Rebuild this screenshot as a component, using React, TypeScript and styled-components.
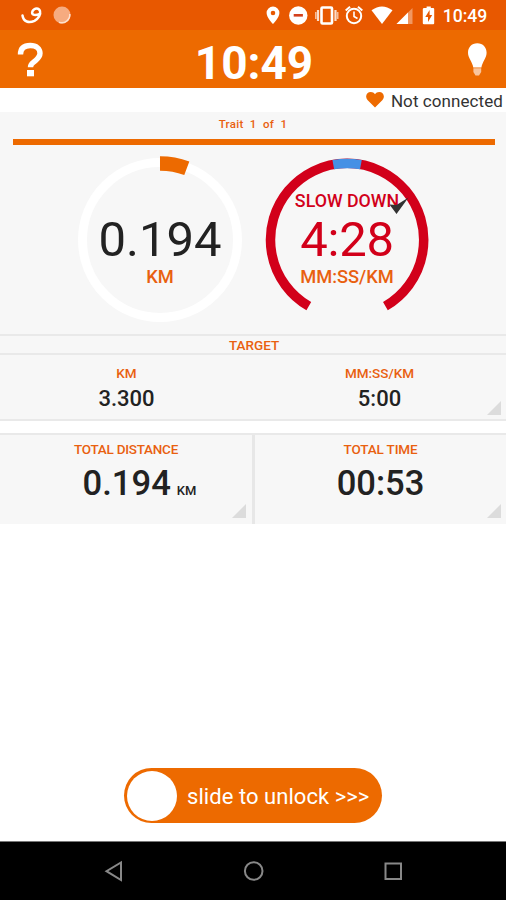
import React from "react";
import styled, { createGlobalStyle } from "styled-components";

const ORANGE = "#ed6a00";
const LABEL = "#e9600f";
const INK = "#222222";
const RED = "#d2001a";
const LINE = "#e9e9e9";

const GlobalStyle = createGlobalStyle`
  *, *::before, *::after { box-sizing: border-box; }
  body { margin: 0; background: #fff; }
`;

const Screen = styled.div`
  width: 506px;
  height: 900px;
  display: flex;
  flex-direction: column;
  overflow: hidden;
  background: #fff;
  color: ${INK};
  font-family: Roboto, "Liberation Sans", sans-serif;
`;

const StatusBar = styled.div`
  flex: none;
  height: 30px;
  background: #e85800;
  svg { display: block; }
`;

const AppBar = styled.header`
  flex: none;
  height: 58px;
  display: grid;
  grid-template-columns: 60px 1fr 58px;
  align-items: center;
  background: ${ORANGE};
  svg { display: block; }
`;

const Label = styled.span<{ $size: number; $weight?: number; $color?: string; $spacing?: number }>`
  display: block;
  white-space: pre;
  font-size: ${(p) => p.$size}px;
  line-height: 1;
  font-weight: ${(p) => p.$weight ?? 500};
  color: ${(p) => p.$color ?? LABEL};
  letter-spacing: ${(p) => p.$spacing ?? 0}px;
`;

const Clock = styled(Label)`
  text-align: center;
  padding-top: 8px;
`;

const Connection = styled.div`
  flex: none;
  height: 24px;
  display: flex;
  align-items: center;
  justify-content: flex-end;
  gap: 6px;
  padding: 3px 3px 0 0;
  svg { margin: -4px 1px 0 0; }
`;

const Workout = styled.section`
  flex: none;
  height: 222px;
  background: #f7f7f7;
  display: flex;
  flex-direction: column;
  align-items: center;
  padding-top: 7px;
`;

const ProgressBar = styled.div`
  width: 482px;
  height: 6px;
  margin: 8px 0 0 1px;
  background: ${ORANGE};
`;

const Gauges = styled.div`
  display: flex;
  gap: 13px;
  margin: 8px 0 0 1px;
`;

const Gauge = styled.div`
  position: relative;
  width: 174px;
  height: 174px;
  svg { display: block; }
`;

const Readout = styled.div`
  position: absolute;
  inset: 0;
  display: flex;
  flex-direction: column;
  align-items: center;
`;

const State = styled.div`
  height: 62px;
  padding-top: 39px;
`;

const Unit = styled.div`
  margin-top: 4px;
`;

const TargetTitle = styled.div`
  flex: none;
  height: 21px;
  display: flex;
  justify-content: center;
  padding: 3px 0 0 2px;
  background: #f7f7f7;
  border-top: 2px solid ${LINE};
  border-bottom: 2px solid ${LINE};
`;

const Row = styled.section<{ $height: number }>`
  flex: none;
  height: ${(p) => p.$height}px;
  display: grid;
  grid-template-columns: 1fr 1fr;
  background: #f7f7f7;
`;

const TargetRow = styled(Row)`
  border-bottom: 2px solid ${LINE};
`;

const TotalRow = styled(Row)`
  margin-top: 12px;
  border-top: 2px solid ${LINE};
  grid-template-columns: 255px 1fr;
`;

const Cell = styled.div<{ $top: number; $gap: number; $divider?: boolean }>`
  position: relative;
  display: flex;
  flex-direction: column;
  align-items: center;
  gap: ${(p) => p.$gap}px;
  padding-top: ${(p) => p.$top}px;
  border-right: ${(p) => (p.$divider ? "3px solid #e7e7e7" : "0")};
`;

const Corner = styled.i<{ $right: number; $bottom: number }>`
  position: absolute;
  right: ${(p) => p.$right}px;
  bottom: ${(p) => p.$bottom}px;
  width: 14px;
  height: 14px;
  background: #dcdcdc;
  clip-path: polygon(100% 0, 100% 100%, 0 100%);
`;

const Measure = styled.div`
  display: flex;
  align-items: baseline;
  gap: 6px;
  padding-left: 27px;
`;

const Spacer = styled.div`
  flex: 1;
`;

const Slider = styled.button`
  flex: none;
  align-self: center;
  width: 258px;
  height: 55px;
  margin: 0 0 18px 0;
  border: 0;
  border-radius: 28px;
  padding: 0 0 0 3px;
  display: flex;
  align-items: center;
  gap: 10px;
  background: ${ORANGE};
  font-family: inherit;
`;

const Knob = styled.span`
  width: 50px;
  height: 50px;
  border-radius: 50%;
  background: #fff;
`;

const SlideText = styled(Label)`
  padding-top: 3px;
`;

const NavBar = styled.nav`
  flex: none;
  height: 59px;
  background: #000;
  border-top: 1px solid #777;
  svg { display: block; }
`;

function StatusIcons() {
  return (
    <svg width="506" height="30" viewBox="0 0 506 30" fill="#fff">
      <path d="M22.500 15.500C23.500 22 29 23.300 34.500 20.800C38.500 18.800 41 14.500 40 11C39 7.500 34.500 7.500 32.500 11.200C31 14.500 34 16.200 40 13.800" fill="none" stroke="#fff" strokeWidth="2.500" strokeLinecap="round" />
      <circle cx="62" cy="15" r="8.500" fill="#f6ab80" />
      <path d="M69.800 14A8 8 0 0 1 59 22.200" fill="none" stroke="#fde0cf" strokeWidth="1.500" />
      <path fillRule="evenodd" d="M273 6.500A6.400 6.400 0 0 0 266.600 13C266.600 17.600 273 24 273 24S279.400 17.600 279.400 13A6.400 6.400 0 0 0 273 6.500ZM273 10.700A2.300 2.300 0 1 1 273 15.300A2.300 2.300 0 0 1 273 10.700Z" />
      <circle cx="298.300" cy="15.500" r="9.200" />
      <rect x="293.700" y="14" width="9.200" height="2.600" fill="#d3401c" />
      <g fill="none" stroke="#fff">
        <rect x="321.500" y="7.500" width="10.500" height="16" rx="1" strokeWidth="2.600" />
        <path d="M318 10V21M335.500 10V21" strokeWidth="2.200" opacity=".8" />
        <path d="M315.800 12V19M337.700 12V19" strokeWidth="1.600" opacity=".6" />
        <circle cx="354" cy="16" r="7.200" strokeWidth="2" />
        <path d="M354 11.500V16.500L357.500 18.500" strokeWidth="1.600" />
        <path d="M345.700 10.500L350 6.800M362.300 10.500L358 6.800" strokeWidth="2" />
      </g>
      <path d="M371.500 10.300Q382 2.500 392.500 10.300L382 24Z" />
      <path d="M412.500 8V24H396.500Z" opacity=".38" />
      <path d="M408 12.500V24H396.500Z" />
      <path d="M424.300 8H426.600V6.500H430.800V8H433.100Q434.200 8 434.200 9V23.300Q434.200 24.300 433.200 24.300H424Q422.800 24.300 422.800 23.300V9Q422.800 8 424.300 8Z" />
      <path d="M429.600 10L425.300 17H428V22L432.200 15H429.600Z" fill="#e85800" />
      <text x="442.800" y="22" fontFamily="Roboto" fontSize="17.600" fontWeight="500" textLength="44.500">10:49</text>
    </svg>
  );
}

function Help() {
  return (
    <svg width="60" height="58" viewBox="0 0 60 58">
      <path d="M20.500 24.500C20.500 18 24.300 15.500 30.300 15.500C36.500 15.500 40 18.800 40 23.300C40 27 37.500 28.800 35 31C32.500 33.200 30.500 33.500 30.500 37.300" fill="none" stroke="#fff" strokeWidth="5.400" />
      <rect x="27" y="40" width="7" height="6.300" fill="#fff" />
    </svg>
  );
}

function Bulb() {
  return (
    <svg width="58" height="58" viewBox="0 0 58 58">
      <path d="M29.300 13.300C23.500 13.300 20 17.500 20 22.700C20 28 24.500 32 25.300 37.500H33.400C34.200 32 38.600 28 38.600 22.700C38.600 17.500 35 13.300 29.300 13.300Z" fill="#fff" />
      <path d="M25.400 38.300H33.200V42L31 45.500H27.500L25.400 42Z" fill="#f9c59d" />
    </svg>
  );
}

function Heart() {
  return (
    <svg width="18" height="17" viewBox="0 0 18 17">
      <path d="M9 16.500L1.500 9C-1.500 5.500 0.800 1 4.800 1C6.600 1 8 1.900 9 3.200C10 1.900 11.400 1 13.200 1C17.200 1 19.500 5.500 16.500 9Z" fill={ORANGE} />
    </svg>
  );
}

function DistanceRing() {
  return (
    <svg width="174" height="174" viewBox="73 153 174 174" fill="none">
      <circle cx="160" cy="240" r="77.500" stroke="#fff" strokeWidth="9" />
      <path d="M160 163.500A76.500 76.500 0 0 1 186.800 168.300" stroke={ORANGE} strokeWidth="14.500" />
    </svg>
  );
}

function PaceRing() {
  return (
    <svg width="174" height="174" viewBox="260 153 174 174" fill="none">
      <path d="M308.800 306.200A76.600 76.600 0 1 1 385.400 306.200" stroke={RED} strokeWidth="9.500" />
      <path d="M333.300 164.700A76.600 76.600 0 0 1 360.900 164.700" stroke="#4590e5" strokeWidth="9.500" />
    </svg>
  );
}

const Needle = styled.svg`
  position: absolute;
  left: 127px;
  top: 42px;
`;

export default function App() {
  return (
    <>
      <GlobalStyle />
      <Screen>
        <StatusBar><StatusIcons /></StatusBar>
        <AppBar>
          <Help />
          <Clock $size={46} $weight={700} $color="#fff">10:49</Clock>
          <Bulb />
        </AppBar>
        <Connection>
          <Heart />
          <Label $size={17} $weight={400} $color="#333" $spacing={0.08}>Not connected</Label>
        </Connection>
        <Workout>
          <Label $size={11.5} $spacing={0.3}>Trait  1  of  1</Label>
          <ProgressBar />
          <Gauges>
            <Gauge>
              <DistanceRing />
              <Readout>
                <State />
                <Label $size={49} $weight={400} $color={INK}>0.194</Label>
                <Unit><Label $size={18.3}>KM</Label></Unit>
              </Readout>
            </Gauge>
            <Gauge>
              <PaceRing />
              <Readout>
                <State><Label $size={17.8} $color={RED}>SLOW DOWN</Label></State>
                <Label $size={49} $weight={400} $color={RED} $spacing={-0.3}>4:28</Label>
                <Unit><Label $size={18.3}>MM:SS/KM</Label></Unit>
              </Readout>
              <Needle width="24" height="22" viewBox="387 195 24 22">
                <path d="M408.500 197.500L396.500 214L389.500 204.500L396.500 205Z" fill="#333" />
              </Needle>
            </Gauge>
          </Gauges>
        </Workout>
        <TargetTitle><Label $size={13.5}>TARGET</Label></TargetTitle>
        <TargetRow $height={66}>
          <Cell $top={12} $gap={7}>
            <Label $size={13.5}>KM</Label>
            <Label $size={22} $color={INK}>3.300</Label>
          </Cell>
          <Cell $top={12} $gap={7}>
            <Label $size={13.5}>MM:SS/KM</Label>
            <Label $size={22} $color={INK}>5:00</Label>
            <Corner $right={5} $bottom={4} />
          </Cell>
        </TargetRow>
        <TotalRow $height={91}>
          <Cell $top={8} $gap={9} $divider>
            <Label $size={13.5} $spacing={-0.25}>TOTAL DISTANCE</Label>
            <Measure>
              <Label $size={34.6} $color={INK}>0.194</Label>
              <Label $size={13} $color={INK}>KM</Label>
            </Measure>
            <Corner $right={6} $bottom={6} />
          </Cell>
          <Cell $top={8} $gap={9}>
            <Label $size={13.5} $spacing={-0.15}>TOTAL TIME</Label>
            <Label $size={34.6} $color={INK}>00:53</Label>
            <Corner $right={5} $bottom={6} />
          </Cell>
        </TotalRow>
        <Spacer />
        <Slider>
          <Knob />
          <SlideText $size={22} $weight={400} $color="#fff" $spacing={0.05}>{"slide to unlock >>>"}</SlideText>
        </Slider>
        <NavBar>
          <svg width="506" height="58" viewBox="0 842 506 58" fill="none" stroke="#888" strokeWidth="2">
            <path d="M121 862.500V880L106.500 871.200Z" />
            <circle cx="253.700" cy="871" r="8.800" />
            <rect x="385.500" y="863.500" width="15.500" height="15.500" />
          </svg>
        </NavBar>
      </Screen>
    </>
  );
}
